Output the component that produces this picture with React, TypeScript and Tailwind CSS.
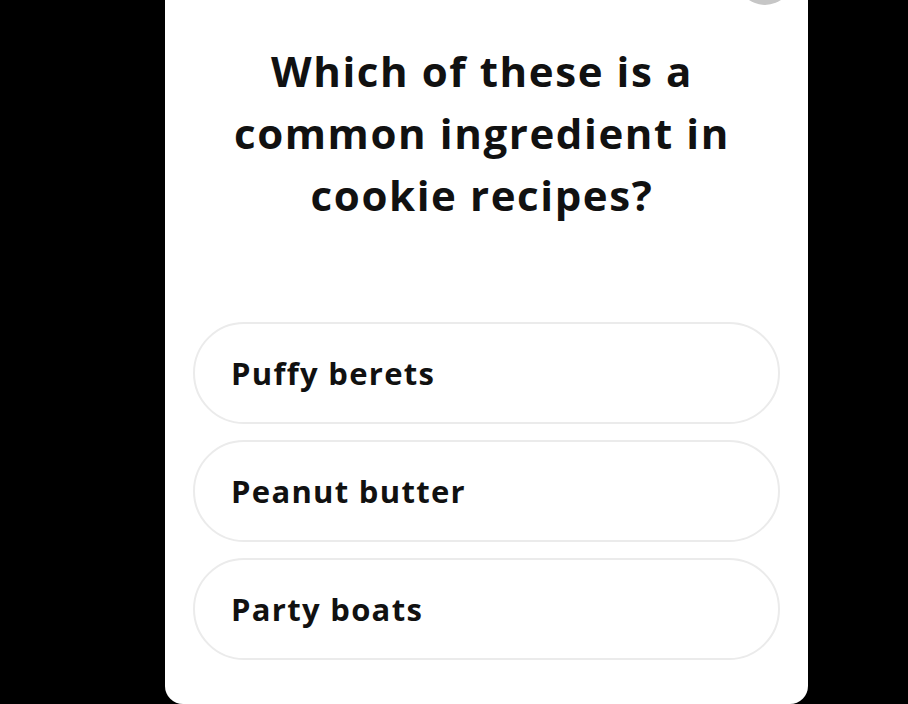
const options = ["Puffy berets", "Peanut butter", "Party boats"];

export default function App() {
  return (
    <div className="min-h-[704px] w-full bg-black">
      <div className="relative ml-[165px] flex h-[704px] w-[643px] flex-col rounded-b-[18px] bg-white px-[28px] pt-[40px]">
        {/* close button peeking in from above */}
        <div className="absolute left-[572px] top-[-51px] h-[56px] w-[56px] rounded-full bg-[#c6c6c6]" />

        <h1
          className="pr-[9px] text-center text-[42px] font-bold leading-[62px] tracking-[1.6px] text-[#111111]"
          style={{ fontFamily: "'Open Sans', 'Liberation Sans', sans-serif" }}
        >
          Which of these is a
          <br />
          common ingredient in
          <br />
          cookie recipes?
        </h1>

        <div className="mt-[96px] flex flex-col gap-[16px]">
          {options.map((opt) => (
            <button
              key={opt}
              className="flex h-[102px] w-full items-center rounded-full border-2 border-[#ebebeb] bg-white pl-[36px] text-left text-[31px] font-bold tracking-[1.3px] text-[#111111]"
              style={{ fontFamily: "'Open Sans', 'Liberation Sans', sans-serif" }}
            >
              {opt}
            </button>
          ))}
        </div>
      </div>
    </div>
  );
}
